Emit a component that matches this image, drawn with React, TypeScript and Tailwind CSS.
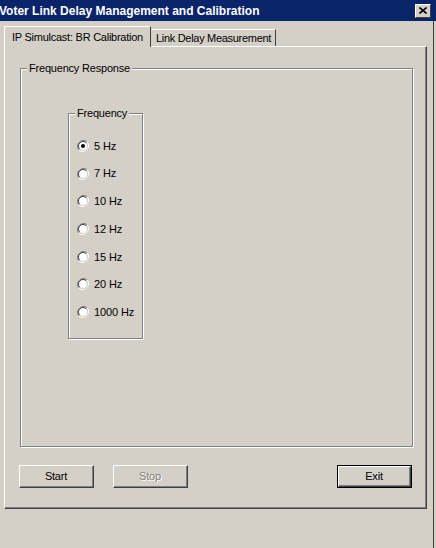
import React from "react";

const font = { fontFamily: '"Liberation Sans", Arial, sans-serif' };

function Radio({ checked }: { checked?: boolean }) {
  return (
    <svg width="12" height="12" viewBox="0 0 12 12" className="shrink-0">
      <path d="M10.2 1.8 A6 6 0 0 0 1.8 10.2" fill="none" stroke="#808080" strokeWidth="1" />
      <path d="M1.8 10.2 A6 6 0 0 0 10.2 1.8" fill="none" stroke="#ffffff" strokeWidth="1" />
      <circle cx="6" cy="6" r="4.5" fill="#ffffff" />
      <path d="M9.2 2.8 A4.5 4.5 0 0 0 2.8 9.2" fill="none" stroke="#404040" strokeWidth="1" />
      <path d="M2.8 9.2 A4.5 4.5 0 0 0 9.2 2.8" fill="none" stroke="#d4d0c8" strokeWidth="1" />
      {checked && <circle cx="6" cy="6" r="2" fill="#000000" />}
    </svg>
  );
}

function Btn({ label, disabled, def }: { label: string; disabled?: boolean; def?: boolean }) {
  return (
    <div className={"w-[75px] h-[23px] " + (def ? "border border-black" : "")}>
      <div className="w-full h-full border-t border-l border-white border-r border-b border-r-[#404040] border-b-[#404040] bg-[#d4d0c8]">
        <div className="w-full h-full border-r border-b border-r-[#808080] border-b-[#808080] flex items-center justify-center text-[11px] tracking-[-0.2px] pt-[1px]">
          {disabled ? (
            <span className="text-[#808080] [text-shadow:1px_1px_0_#ffffff]">{label}</span>
          ) : (
            <span className="text-black">{label}</span>
          )}
        </div>
      </div>
    </div>
  );
}

export default function App() {
  const freqs = ["5 Hz", "7 Hz", "10 Hz", "12 Hz", "15 Hz", "20 Hz", "1000 Hz"];
  return (
    <div className="w-[436px] h-[548px] bg-[#d4d0c8] overflow-hidden text-black" style={font}>
      <div className="h-[21px] bg-[#0a246a] flex items-center justify-between pr-[5px]">
        <span className="text-white font-bold text-[12px] -ml-[1px] whitespace-nowrap">
          Voter Link Delay Management and Calibration
        </span>
        <div className="w-[16px] h-[14px] bg-[#d4d0c8] border-t border-l border-white border-r border-b border-r-[#404040] border-b-[#404040] flex items-center justify-center">
          <svg width="8" height="7" viewBox="0 0 8 7">
            <path d="M0.5 0.5 L7.5 6.5 M7.5 0.5 L0.5 6.5" stroke="#000" strokeWidth="1.6" />
          </svg>
        </div>
      </div>
      <div className="w-[434px] h-[527px] border-r border-[#404040]">
        {/* tabs */}
        <div className="pt-[5px] pl-[4px] flex items-end h-[25px]">
          <div className="px-[7px] border-t border-l border-white border-r border-r-[#404040] flex items-center text-[11px] tracking-[-0.25px] relative z-10 bg-[#d4d0c8] -mb-[1px] h-[21px]">
            IP Simulcast: BR Calibration
          </div>
          <div className="h-[17px] px-[4px] border-t border-white border-r border-r-[#404040] flex items-center text-[11px] tracking-[-0.3px] ml-[1px]">
            Link Delay Measurement
          </div>
        </div>
        {/* panel */}
        <div className="ml-[4px] w-[423px] h-[463px] border-t border-l border-white border-r border-b border-r-[#404040] border-b-[#404040]">
          <div className="w-full h-full border-r border-b border-r-[#808080] border-b-[#808080] pl-[15px] pt-[21px]">
            {/* Frequency Response groupbox */}
            <div className="relative w-[393px] h-[379px] border border-[#808080] shadow-[inset_1px_1px_0_#ffffff,1px_1px_0_#ffffff]">
              <span className="absolute -top-[8px] left-[6px] bg-[#d4d0c8] px-[2px] text-[11px] tracking-[-0.2px] leading-[14px]">
                Frequency Response
              </span>
              <div className="pl-[47px] pt-[44px]">
                <div className="relative w-[75px] h-[226px] border border-[#808080] shadow-[inset_1px_1px_0_#ffffff,1px_1px_0_#ffffff]">
                  <span className="absolute -top-[8px] left-[6px] bg-[#d4d0c8] px-[2px] text-[11px] tracking-[-0.2px] leading-[14px]">
                    Frequency
                  </span>
                  <div className="flex flex-col gap-[15.7px] pt-[26px] pl-[8px]">
                    {freqs.map((f, i) => (
                      <div key={f} className="flex items-center gap-[5px] h-[12px] text-[11px] tracking-[-0.1px]">
                        <Radio checked={i === 0} />
                        <span className="whitespace-nowrap">{f}</span>
                      </div>
                    ))}
                  </div>
                </div>
              </div>
            </div>
            {/* buttons */}
            <div className="flex items-center mt-[18px] w-[393px] -ml-[1px]">
              <Btn label="Start" />
              <div className="ml-[19px]">
                <Btn label="Stop" disabled />
              </div>
              <div className="ml-auto">
                <Btn label="Exit" def />
              </div>
            </div>
          </div>
        </div>
      </div>
    </div>
  );
}
